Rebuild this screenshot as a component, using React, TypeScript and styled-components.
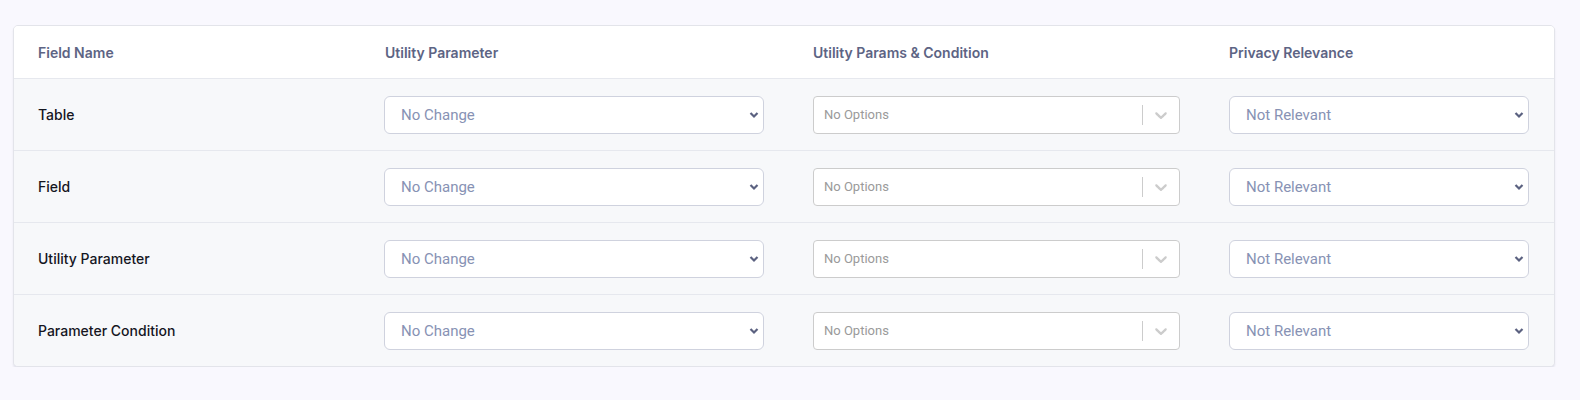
import React from "react";
import styled, { createGlobalStyle } from "styled-components";

const GlobalStyle = createGlobalStyle`
    body {
        margin: 0;
        background: #f9f8fe;
        font-family: Inter, "Noto Sans", sans-serif;
    }
`;

const Page = styled.div`
    padding: 25px 25px 0 13px;
`;

const Card = styled.div`
    background: #f7f8fa;
    border: 1px solid #e3e4ea;
    border-radius: 5px;
    box-shadow: 0 2px 2px rgba(40, 45, 80, 0.1);
    overflow: hidden;
`;

const Row = styled.div<{ $head?: boolean }>`
    display: grid;
    grid-template-columns: 346px 429px 416px 1fr;
    align-items: center;
    padding: 0 24px 0 24px;
    height: ${(p) => (p.$head ? "52px" : "71px")};
    background: ${(p) => (p.$head ? "#ffffff" : "#f7f8fa")};
    & + & {
        border-top: 1px solid #e6e8ee;
    }
`;

const HeadCell = styled.div<{ $shift?: boolean }>`
    font-size: 14px;
    font-weight: 600;
    color: #5d6484;
    padding-left: ${(p) => (p.$shift ? "1px" : "0")};
`;

const Label = styled.div`
    font-size: 14px;
    font-weight: 500;
    color: #15161f;
`;

const SelectWrap = styled.div<{ $width: number }>`
    position: relative;
    width: ${(p) => p.$width}px;
`;

const NativeSelect = styled.select`
    appearance: none;
    width: 100%;
    height: 38px;
    padding: 0 30px 0 16px;
    border: 1px solid #cfd2de;
    border-radius: 6px;
    background: #ffffff;
    font-family: Roboto, "Open Sans", sans-serif;
    font-size: 15px;
    color: #8792b4;
    outline: none;
`;

const Chevron = styled.svg`
    position: absolute;
    right: 5px;
    top: 14px;
    width: 10px;
    height: 10px;
    pointer-events: none;
`;

const Combo = styled.div`
    display: flex;
    align-items: center;
    width: 367px;
    height: 38px;
    box-sizing: border-box;
    border: 1px solid #cccccc;
    border-radius: 4px;
    background: #ffffff;
`;

const ComboValue = styled.div`
    flex: 1;
    padding: 0 10px;
    font-family: Roboto, "Open Sans", sans-serif;
    font-size: 13px;
    color: #9a9a9a;
`;

const Separator = styled.span`
    width: 1px;
    align-self: stretch;
    margin: 8px 0;
    background: #cccccc;
`;

const Indicator = styled.div`
    display: flex;
    padding: 8px;
    color: #cccccc;
`;

const SelectBox = ({ value, width }: { value: string; width: number }) => (
    <SelectWrap $width={width}>
        <NativeSelect defaultValue={value}>
            <option>{value}</option>
        </NativeSelect>
        <Chevron viewBox="0 0 10 10">
            <path d="M1.5 3 L5 6.5 L8.5 3" fill="none" stroke="#5b6180" strokeWidth="2.2" />
        </Chevron>
    </SelectWrap>
);

const EmptyCombo = () => (
    <Combo>
        <ComboValue>No Options</ComboValue>
        <Separator />
        <Indicator>
            <svg width="20" height="20" viewBox="0 0 20 20" fill="currentColor">
                <path d="M4.516 7.548c0.436-0.446 1.043-0.481 1.576 0l3.908 3.747 3.908-3.747c0.533-0.481 1.141-0.446 1.574 0 0.436 0.445 0.408 1.197 0 1.615-0.406 0.418-4.695 4.502-4.695 4.502-0.217 0.223-0.502 0.335-0.787 0.335s-0.57-0.112-0.789-0.335c0 0-4.287-4.084-4.695-4.502s-0.436-1.17 0-1.615z" />
            </svg>
        </Indicator>
    </Combo>
);

const fields = ["Table", "Field", "Utility Parameter", "Parameter Condition"];

const App = () => (
    <Page>
        <GlobalStyle />
        <Card>
            <Row $head>
                <HeadCell>Field Name</HeadCell>
                <HeadCell $shift>Utility Parameter</HeadCell>
                <HeadCell>Utility Params &amp; Condition</HeadCell>
                <HeadCell>Privacy Relevance</HeadCell>
            </Row>
            {fields.map((name) => (
                <Row key={name}>
                    <Label>{name}</Label>
                    <SelectBox value="No Change" width={380} />
                    <EmptyCombo />
                    <SelectBox value="Not Relevant" width={300} />
                </Row>
            ))}
        </Card>
    </Page>
);

export default App;
